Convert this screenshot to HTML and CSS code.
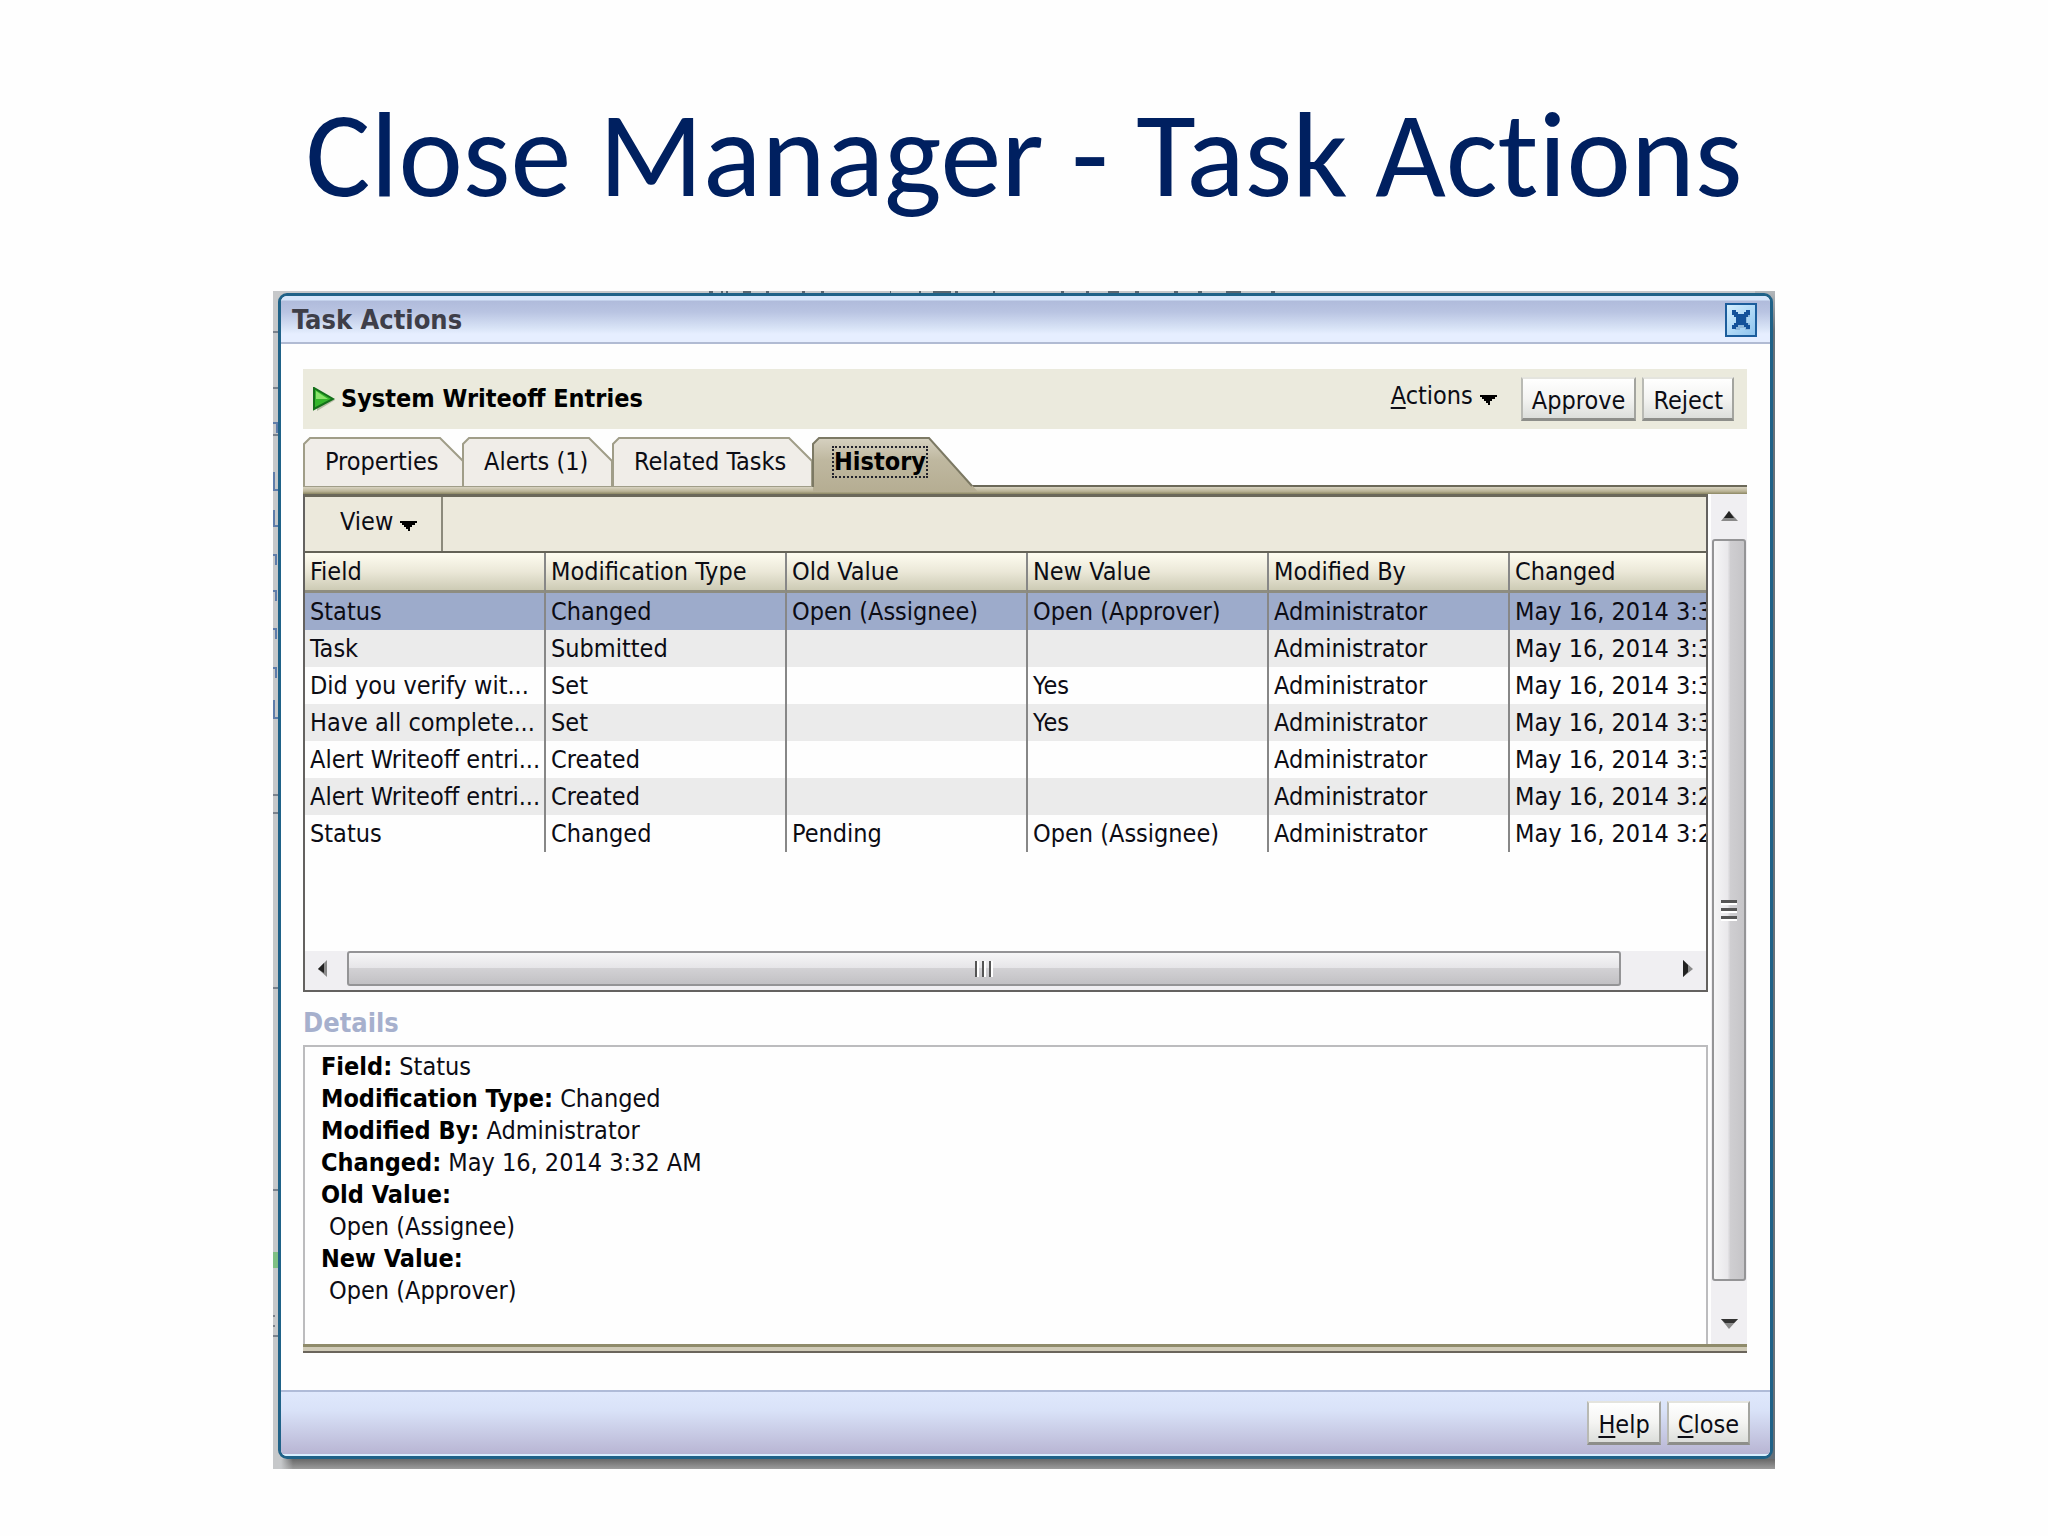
FILE: index.html
```html
<!DOCTYPE html>
<html lang="en">
<head>
<meta charset="utf-8">
<title>Close Manager - Task Actions</title>
<link rel="stylesheet" href="styles.css">
</head>
<body>
<main class="slide">
  <h1 class="slide-title">Close Manager - Task Actions</h1>
  <div class="backdrop">
    <svg class="page-edge" width="1100" height="1060" viewBox="0 0 1100 1060" aria-hidden="true">
      <path stroke="#5a6670" stroke-width="2" d="M436 1h4M448 1h2M453 1h2M470 1h8M493 1h3M529 1h3M548 1h3M617 1h1M646 1h2M660 1h18M682 1h3M720 1h2M788 1h3M813 1h3M835 1h11M862 1h4M901 1h4M925 1h4M953 1h15M998 1h4"/>
      <path fill="none" stroke="#7a828c" stroke-width="2" d="M0 41h5M0 97h5M0 144h5M0 504h5M0 522h5M0 697h5M0 899h5M0 1025h2M0 1035h2M0 1045h5"/>
      <path fill="none" stroke="#5f7daa" stroke-width="2" d="M0 132h4v10M1 181v18h4M1 219v16h4M0 264h3v10M0 300h3v10M0 338h3v10M0 377h3v10M1 409v18h4"/>
      <path fill="#7fc084" d="M0 961h5v16H0z"/>
    </svg>
    <section class="dialog" aria-labelledby="dialog-title">
      <header class="dialog-header">
        <h2 class="dialog-title" id="dialog-title">Task Actions</h2>
        <button class="close-icon" type="button" aria-label="Close dialog">
          <svg width="20" height="20" viewBox="0 0 20 20"><path fill="#8fb9dc" d="M5 4h14v3h-3v6h3v7h-5v-2H9v2H4v-5h2V8H5z"/><path fill="#14529a" d="M1 0h4v2h2v2h6V2h2V0h4v5h-2v2h-2v6h2v2h2v4h-4v-2h-2v-2H7v2H5v2H1v-4h2v-2h2V7H3V5H1z"/></svg>
        </button>
      </header>

      <div class="dialog-body">
        <div class="task-bar">
          <svg class="play" width="22" height="24" viewBox="0 0 22 24"><path d="M4 4v20l18-11z" fill="#b5b9a4"/><path d="M1 1v21L20 12z" fill="#35b52c" stroke="#14701a" stroke-width="2"/><path d="M3 4v8h12z" fill="#8be36c"/></svg>
          <h3 class="task-name">System Writeoff Entries</h3>
          <button class="menu-button actions" type="button"><span><u>A</u>ctions</span><svg width="17" height="10" viewBox="0 0 17 10"><path d="M0 0h17v2h-2v2h-3v2h-2v4H8V8H6V6H4V4H2V2H0z"/></svg></button>
          <button class="button" type="button">Approve</button>
          <button class="button" type="button">Reject</button>
        </div>

        <div class="tabs" role="tablist">
          <button class="tab tab-properties" type="button" role="tab"><svg class="tab-shape" viewBox="0 0 160 50" width="160" height="50"><path class="tab-fill" d="M1 50V7l6-6h130l23 23v26z"/></svg><span>Properties</span></button>
          <button class="tab tab-alerts" type="button" role="tab"><svg class="tab-shape" viewBox="0 0 150 50" width="150" height="50"><path class="tab-fill" d="M1 50V7l6-6h120l23 23v26z"/></svg><span>Alerts (1)</span></button>
          <button class="tab tab-related" type="button" role="tab"><svg class="tab-shape" viewBox="0 0 200 50" width="200" height="50"><path class="tab-fill" d="M1 50V7l6-6h170l23 23v26z"/></svg><span>Related Tasks</span></button>
          <button class="tab tab-history" type="button" role="tab" aria-selected="true"><svg class="tab-shape" viewBox="0 0 166 56" width="166" height="56"><defs><linearGradient id="tan" x1="0" y1="0" x2="0" y2="1"><stop offset="0" stop-color="#d6d1c0"/><stop offset=".4" stop-color="#bfb8a0"/><stop offset="1" stop-color="#b5ad92"/></linearGradient></defs><path fill="url(#tan)" d="M1 55V7l6-6h110l43 47 6 7z"/><path fill="none" stroke="#7c7964" stroke-width="2" d="M1 50V7l6-6h110l43 48"/></svg><span>History</span></button>
        </div>
        <div class="band"></div>

        <div class="content">
          <div class="pane">
            <div class="grid-box">
              <div class="toolbar">
                <button class="menu-button view" type="button"><span>View</span><svg width="17" height="10" viewBox="0 0 17 10"><path d="M0 0h17v2h-2v2h-3v2h-2v4H8V8H6V6H4V4H2V2H0z"/></svg></button>
              </div>
              <div class="table-view">
                <table class="history">
                  <colgroup><col class="col"><col class="col"><col class="col"><col class="col"><col class="col"><col></colgroup>
                  <thead><tr><th>Field</th><th>Modification Type</th><th>Old Value</th><th>New Value</th><th>Modified By</th><th>Changed</th></tr></thead>
                  <tbody>
                    <tr class="selected"><td>Status</td><td>Changed</td><td>Open (Assignee)</td><td>Open (Approver)</td><td>Administrator</td><td>May 16, 2014 3:32 AM</td></tr>
                    <tr><td>Task</td><td>Submitted</td><td></td><td></td><td>Administrator</td><td>May 16, 2014 3:32 AM</td></tr>
                    <tr><td>Did you verify wit...</td><td>Set</td><td></td><td>Yes</td><td>Administrator</td><td>May 16, 2014 3:32 AM</td></tr>
                    <tr><td>Have all complete...</td><td>Set</td><td></td><td>Yes</td><td>Administrator</td><td>May 16, 2014 3:32 AM</td></tr>
                    <tr><td>Alert Writeoff entri...</td><td>Created</td><td></td><td></td><td>Administrator</td><td>May 16, 2014 3:30 AM</td></tr>
                    <tr><td>Alert Writeoff entri...</td><td>Created</td><td></td><td></td><td>Administrator</td><td>May 16, 2014 3:28 AM</td></tr>
                    <tr><td>Status</td><td>Changed</td><td>Pending</td><td>Open (Assignee)</td><td>Administrator</td><td>May 16, 2014 3:28 AM</td></tr>
                  </tbody>
                </table>
              </div>
              <div class="hscroll">
                <svg width="10" height="17" viewBox="0 0 10 17"><path d="M9 0v17L0 9z" fill="#8a8a8a"/><path d="M6 3v10L0 9z" fill="#222"/></svg>
                <div class="hthumb"><i></i><i></i><i></i></div>
                <svg width="10" height="17" viewBox="0 0 10 17"><path d="M0 0v17l10-8z" fill="#8a8a8a"/><path d="M0 0v17l5-5V5z" fill="#222"/></svg>
              </div>
            </div>

            <h3 class="details-title">Details</h3>
            <div class="details">
              <p><b>Field:</b> Status</p>
              <p><b>Modification Type:</b> Changed</p>
              <p><b>Modified By:</b> Administrator</p>
              <p><b>Changed:</b> May 16, 2014 3:32 AM</p>
              <p><b>Old Value:</b></p>
              <p class="value">Open (Assignee)</p>
              <p><b>New Value:</b></p>
              <p class="value">Open (Approver)</p>
            </div>
          </div>
          <div class="vscroll">
            <svg width="17" height="10" viewBox="0 0 17 10"><path d="M0 10h17L8 0z" fill="#8a8a8a"/><path d="M3 7h10L8 0z" fill="#222"/></svg>
            <div class="vthumb"><i></i><i></i><i></i></div>
            <svg width="17" height="10" viewBox="0 0 17 10"><path d="M0 0h17L8 10z" fill="#8a8a8a"/><path d="M0 0h17l-4 4H4z" fill="#333"/></svg>
          </div>
        </div>
        <div class="band band-bottom"></div>
      </div>

      <footer class="dialog-footer">
        <button class="button" type="button"><u>H</u>elp</button>
        <button class="button" type="button"><u>C</u>lose</button>
      </footer>
    </section>
  </div>
</main>
</body>
</html>
```
FILE: styles.css
```css
* { box-sizing: border-box; }

body {
  margin: 0;
  background: #fefefe;
  color: #0c0c14;
  font: 25px/32px "DejaVu Sans Condensed", "Noto Sans", sans-serif;
}

h1, h2, h3, p { margin: 0; }

button {
  font: inherit;
  color: inherit;
  border: 0;
  padding: 0;
  background: none;
  white-space: nowrap;
}

u { text-underline-offset: 3px; text-decoration-thickness: 2px; }

.slide { padding: 83px 273px 68px; }

.slide-title {
  margin-bottom: 64px;
  color: #002060;
  font: 400 122px/144px Carlito, Calibri, Lato, sans-serif;
  font-variant-ligatures: none;
  text-align: center;
  white-space: nowrap;
}

/* Sliver of the page that shows behind the dialog */
.backdrop {
  position: relative;
  padding: 2px 2px 10px 5px;
  background:
    linear-gradient(90deg, #c6c8ca 0 8px, transparent 20px) left bottom / 100% 12px no-repeat,
    linear-gradient(#686868, #9c9c9c) left bottom / 100% 10px no-repeat,
    linear-gradient(#b4b8bb, #667078 40px) right top / 20px 100% no-repeat,
    #c6c8ca;
}

.page-edge { position: absolute; left: 0; top: 0; }

.dialog {
  position: relative;
  border: 3px solid #1f6288;
  border-radius: 9px;
  background: #fefefe;
  overflow: hidden;
}

.dialog-header {
  display: flex;
  align-items: center;
  justify-content: space-between;
  height: 48px;
  padding: 2px 13px 0 11px;
  border-bottom: 2px solid #b1bbd3;
  background: linear-gradient(#d6e6fb 0 4px, #b0bbdb 5px, #b9c4e2 16px, #d8e3f6 32px, #e6eeff 38px);
}

.dialog-title { color: #3e3e48; font-size: 27px; line-height: 32px; }

.close-icon {
  display: grid;
  place-items: center;
  width: 32px;
  height: 34px;
  border: 2px solid #1c5d9c;
  background: linear-gradient(135deg, #d4efff, #8fc4ee);
}

.dialog-body { padding: 25px 23px 37px 22px; }

.task-bar {
  display: flex;
  align-items: center;
  height: 60px;
  gap: 6px;
  padding: 0 13px 0 10px;
  background: #ebeadd;
}

.task-name { flex: 1; font-size: 25px; line-height: 32px; color: #000; }

.menu-button { display: flex; align-items: center; gap: 7px; }
.menu-button svg { margin-top: 8px; }
.actions { margin-right: 18px; padding-bottom: 6px; }

.button {
  height: 44px;
  padding: 4px 9px 0;
  border: 2px solid #b9bab4;
  border-top-color: #e4e4de;
  border-right-color: #a3a49f;
  border-bottom: 3px solid #8d8e8a;
  background: linear-gradient(#fff, #f4f4f2 50%, #dcdedb);
}

.tabs { display: flex; height: 48px; margin-top: 8px; }

.tab {
  position: relative;
  height: 48px;
  padding: 2px 0 0 22px;
  text-align: left;
}
.tab span { position: relative; }
.tab-shape { position: absolute; left: 0; top: 0; }
.tab-fill { fill: #f0ede8; stroke: #a09d88; stroke-width: 2; }
.tab-properties { width: 159px; }
.tab-alerts { width: 150px; }
.tab-related { width: 200px; }
.tab-history { width: 160px; z-index: 1; font-weight: 700; color: #000; }
.tab-history span { display: inline-block; outline: 2px dotted #22222c; line-height: 28px; }

.band {
  height: 9px;
  border-top: 2px solid #6b6858;
  background: linear-gradient(#d8d3c1 0, #bcb598 60%, #8c8763);
}
.band-bottom {
  border-top: 0;
  border-bottom: 2px solid #6b655c;
  background: linear-gradient(#8f8b6b 0 3px, #d0cbb8 3px);
}

.content { display: flex; }
.pane { flex: 1; min-width: 0; }

.grid-box { border: 2px solid #646260; border-top: 3px solid #6b685a; }

.toolbar { display: flex; height: 56px; border-bottom: 2px solid #646256; background: #ece9dc; }
.view { width: 138px; padding: 0 0 4px 35px; border-right: 2px solid #8c8a7c; }

.table-view { height: 398px; overflow: hidden; }

.history { table-layout: fixed; width: 1520px; border-spacing: 0; }
.col { width: 241px; }
.history th, .history td {
  height: 37px;
  padding: 1px 5px 0;
  border-right: 2px solid #878787;
  text-align: left;
  font-weight: 400;
  white-space: nowrap;
  overflow: hidden;
}
.history th {
  height: 40px;
  border-bottom: 3px solid #8e8d80;
  background: linear-gradient(#fefcf0, #ebe8d8 50%, #cdcbb5);
}
.history tbody tr:nth-child(even) { background: #ebebeb; }
.history tbody .selected { background: #9dabcb; }

.hscroll {
  display: flex;
  align-items: center;
  gap: 19px;
  height: 39px;
  padding: 0 13px 4px;
  background: #f0eff2;
}
.hthumb {
  display: flex;
  flex: 1;
  align-items: center;
  justify-content: center;
  gap: 3px;
  height: 35px;
  margin-right: 43px;
  border: 2px solid #949496;
  border-radius: 3px;
  background: linear-gradient(#f6f6f7, #e6e5e8 48%, #d2d1d4 50%, #c2c1c4);
}
.hthumb i { width: 4px; height: 16px; background: linear-gradient(90deg, #555 2px, #fff 2px); }

.details-title { padding: 15px 0 6px; color: #a6b0cd; font-size: 27px; line-height: 32px; }

.details {
  height: 299px;
  padding: 4px 16px 0;
  border: 2px solid #bcbcbe;
  border-bottom: 0;
}
.details b { color: #000; }
.value { padding-left: 8px; }

.vscroll {
  display: flex;
  flex-direction: column;
  align-items: center;
  gap: 18px;
  width: 36px;
  margin-left: 3px;
  padding: 17px 0 15px;
  background: #f0eff2;
}
.vthumb {
  display: flex;
  flex: 1;
  flex-direction: column;
  align-items: center;
  justify-content: center;
  gap: 3px;
  width: 34px;
  margin-bottom: 20px;
  border: 2px solid #949496;
  border-radius: 3px;
  background: linear-gradient(90deg, #f6f6f7, #e9e8eb 45%, #cfced1 55%, #c6c5c8);
}
.vthumb i { width: 16px; height: 5px; background: linear-gradient(#555 3px, #fff 3px); }

.dialog-footer {
  display: flex;
  justify-content: flex-end;
  gap: 6px;
  height: 66px;
  padding: 9px 20px 0;
  border-top: 2px solid #afbbd8;
  border-bottom: 2px solid #d9efff;
  background: linear-gradient(#dfe8fc, #d9e2f8 30%, #b8b5d3);
}
```
